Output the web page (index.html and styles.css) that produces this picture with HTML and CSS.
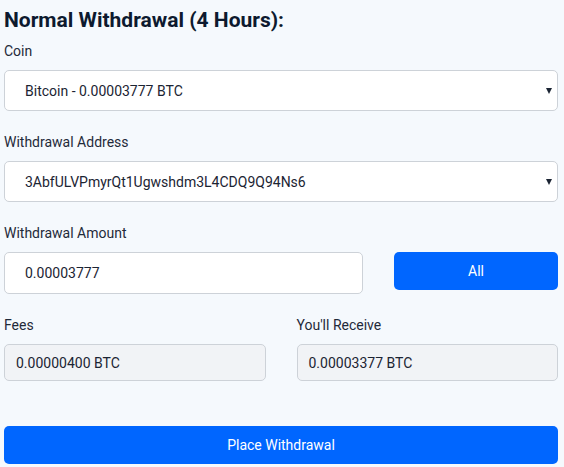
FILE: index.html
```html
<!DOCTYPE html>
<html>
<head>
<meta charset="utf-8">
<link rel="stylesheet" href="styles.css">
</head>
<body>
<div class="form">
  <h2 class="title">Normal Withdrawal (4 Hours):</h2>
  <div class="field">
    <label class="label">Coin</label>
    <div class="select"><span>Bitcoin - 0.00003777 BTC</span><span class="caret"></span></div>
  </div>
  <div class="field">
    <label class="label">Withdrawal Address</label>
    <div class="select"><span>3AbfULVPmyrQt1Ugwshdm3L4CDQ9Q94Ns6</span><span class="caret"></span></div>
  </div>
  <div class="field">
    <label class="label">Withdrawal Amount</label>
    <div class="amount-row">
      <div class="input">0.00003777</div>
      <button class="btn btn-all">All</button>
    </div>
  </div>
  <div class="pair">
    <div class="field">
      <label class="label">Fees</label>
      <div class="readonly">0.00000400 BTC</div>
    </div>
    <div class="field">
      <label class="label">You'll Receive</label>
      <div class="readonly">0.00003377 BTC</div>
    </div>
  </div>
  <button class="btn btn-place">Place Withdrawal</button>
</div>
</body>
</html>
```
FILE: styles.css
```css
html, body {
  margin: 0;
  padding: 0;
  background: #f5f9fd;
}
body {
  font-family: Roboto, "Noto Sans", sans-serif;
  color: #1b2433;
  font-size: 14px;
}
.form {
  width: 554px;
  padding: 8px 6px 0 4px;
}
.title {
  margin: 0 0 9px;
  font-size: 21px;
  line-height: 24px;
  font-weight: 700;
  color: #0d1a2f;
}
.field {
  display: flex;
  flex-direction: column;
  margin-bottom: 21px;
}
.label {
  display: block;
  line-height: 20px;
  margin-bottom: 9px;
  color: #1f2a3a;
}
.select {
  height: 41px;
  box-sizing: border-box;
  background: #fff;
  border: 1px solid #cdd2d8;
  border-radius: 5px;
  display: flex;
  align-items: center;
  justify-content: space-between;
  padding: 0 5px 0 20px;
  color: #1b2433;
}
.caret {
  width: 0;
  height: 0;
  border-left: 3px solid transparent;
  border-right: 3px solid transparent;
  border-top: 6px solid #1b2433;
  margin-top: 1px;
}
.amount-row {
  display: flex;
  gap: 31px;
  align-items: flex-start;
}
.input {
  width: 359px;
  height: 42px;
  box-sizing: border-box;
  background: #fff;
  border: 1px solid #cdd2d8;
  border-radius: 5px;
  display: flex;
  align-items: center;
  padding-left: 20px;
}
.btn {
  font-family: Roboto, "Noto Sans", sans-serif;
  font-size: 14px;
  color: #fff;
  background: #0066ff;
  border: none;
  border-radius: 5px;
  cursor: pointer;
}
.btn-all {
  flex: 1;
  height: 38px;
}
.pair {
  display: grid;
  grid-template-columns: 1fr 1fr;
  gap: 31px;
}
.pair .field {
  margin-bottom: 45px;
}
.readonly {
  height: 37px;
  box-sizing: border-box;
  background: #f1f3f6;
  border: 1px solid #cdd2d8;
  border-radius: 5px;
  display: flex;
  align-items: center;
  padding-left: 11px;
}
.btn-place {
  display: block;
  width: 100%;
  height: 38px;
}
```
